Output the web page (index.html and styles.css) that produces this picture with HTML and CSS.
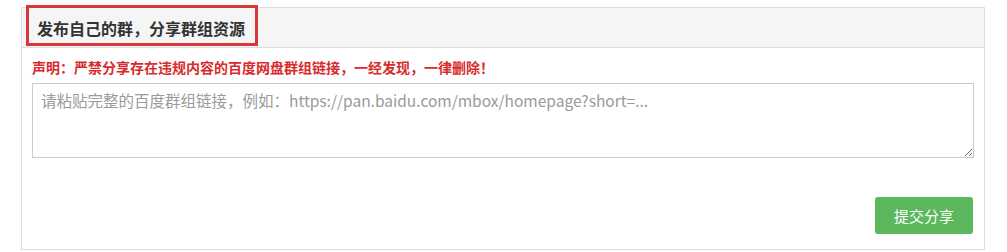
FILE: index.html
```html
<!DOCTYPE html>
<html lang="zh-CN">
<head>
<meta charset="utf-8">
<link rel="stylesheet" href="styles.css">
</head>
<body>
<div class="panel">
  <div class="panel-heading">
    <h3 class="panel-title">发布自己的群，分享群组资源</h3>
    <span class="mark"></span>
  </div>
  <div class="panel-body">
    <p class="notice">声明：严禁分享存在违规内容的百度网盘群组链接，一经发现，一律删除！</p>
    <textarea class="link-input" placeholder="请粘贴完整的百度群组链接，例如：https://pan.baidu.com/mbox/homepage?short=..."></textarea>
    <div class="actions">
      <button class="btn-submit" type="button">提交分享</button>
    </div>
  </div>
</div>
</body>
</html>
```
FILE: styles.css
```css
html, body {
  margin: 0;
  padding: 0;
  background: #ffffff;
}
body {
  font-family: "Noto Sans CJK SC", "Noto Sans", sans-serif;
  color: #333;
}
.panel {
  margin: 7px 0 0 21px;
  width: 964px;
  height: 243px;
  box-sizing: border-box;
  border: 1px solid #dddddd;
  display: flex;
  flex-direction: column;
}
.panel-heading {
  position: relative;
  height: 40px;
  box-sizing: border-box;
  background: #f5f5f5;
  border-bottom: 1px solid #dddddd;
  padding: 0 15px;
  display: flex;
  align-items: center;
}
.panel-title {
  margin: 0;
  font-size: 16px;
  font-weight: bold;
  color: #333;
  line-height: 20px;
}
.mark {
  position: absolute;
  left: 4px;
  top: -3px;
  width: 232px;
  height: 41px;
  box-sizing: border-box;
  border: 3px solid #d9383a;
}
.panel-body {
  flex: 1;
  padding: 10px 10px 15px 10px;
  display: flex;
  flex-direction: column;
}
.notice {
  margin: 0 0 7px 0;
  font-size: 14px;
  font-weight: bold;
  line-height: 18px;
  color: #d82b2b;
}
.link-input {
  display: block;
  width: 100%;
  height: 75px;
  box-sizing: border-box;
  border: 1px solid #cccccc;
  border-radius: 0;
  padding: 5px 8px;
  font-family: "Noto Sans CJK SC", "Noto Sans", sans-serif;
  font-size: 15.5px;
  line-height: 22px;
  color: #555;
  resize: vertical;
}
.link-input::placeholder {
  color: #9a9a9a;
}
.actions {
  margin-top: auto;
  display: flex;
  justify-content: flex-end;
  padding-right: 1px;
}
.btn-submit {
  width: 98px;
  height: 37px;
  border: none;
  border-radius: 3px;
  background: #5cb85c;
  color: #ffffff;
  font-family: "Noto Sans CJK SC", "Noto Sans", sans-serif;
  font-size: 15px;
}
```
